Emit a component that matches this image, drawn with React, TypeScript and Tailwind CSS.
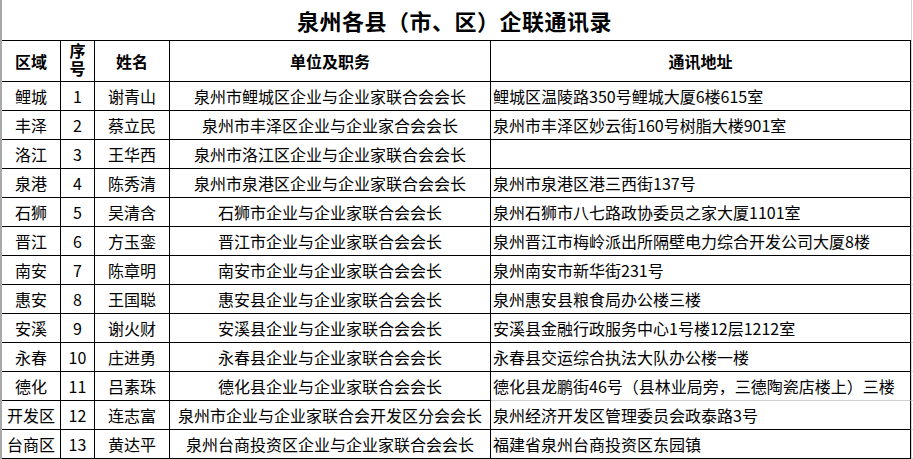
import React from "react"

type Row = {
  area: string
  no: number
  name: string
  unit: string
  addr: string
}

const rows: Row[] = [
  { area: "鲤城", no: 1, name: "谢青山", unit: "泉州市鲤城区企业与企业家联合会会长", addr: "鲤城区温陵路350号鲤城大厦6楼615室" },
  { area: "丰泽", no: 2, name: "蔡立民", unit: "泉州市丰泽区企业与企业家合会会长", addr: "泉州市丰泽区妙云街160号树脂大楼901室" },
  { area: "洛江", no: 3, name: "王华西", unit: "泉州市洛江区企业与企业家联合会会长", addr: "" },
  { area: "泉港", no: 4, name: "陈秀清", unit: "泉州市泉港区企业与企业家联合会会长", addr: "泉州市泉港区港三西街137号" },
  { area: "石狮", no: 5, name: "吴清含", unit: "石狮市企业与企业家联合会会长", addr: "泉州石狮市八七路政协委员之家大厦1101室" },
  { area: "晋江", no: 6, name: "方玉銮", unit: "晋江市企业与企业家联合会会长", addr: "泉州晋江市梅岭派出所隔壁电力综合开发公司大厦8楼" },
  { area: "南安", no: 7, name: "陈章明", unit: "南安市企业与企业家联合会会长", addr: "泉州南安市新华街231号" },
  { area: "惠安", no: 8, name: "王国聪", unit: "惠安县企业与企业家联合会会长", addr: "泉州惠安县粮食局办公楼三楼" },
  { area: "安溪", no: 9, name: "谢火财", unit: "安溪县企业与企业家联合会会长", addr: "安溪县金融行政服务中心1号楼12层1212室" },
  { area: "永春", no: 10, name: "庄进勇", unit: "永春县企业与企业家联合会会长", addr: "永春县交运综合执法大队办公楼一楼" },
  { area: "德化", no: 11, name: "吕素珠", unit: "德化县企业与企业家联合会会长", addr: "德化县龙鹏街46号（县林业局旁，三德陶瓷店楼上）三楼" },
  { area: "开发区", no: 12, name: "连志富", unit: "泉州市企业与企业家联合会开发区分会会长", addr: "泉州经济开发区管理委员会政泰路3号" },
  { area: "台商区", no: 13, name: "黄达平", unit: "泉州台商投资区企业与企业家联合会会长", addr: "福建省泉州台商投资区东园镇" },
]

// black cell edge on the right and bottom, like the sheet's borders
const cell = "flex items-center justify-center border-r border-b border-black whitespace-nowrap"

export default function App() {
  return (
    <div
      className="w-[913px] h-[459px] overflow-hidden bg-white text-black flex"
      style={{ fontFamily: '"Noto Sans CJK SC", "Noto Sans", sans-serif' }}
    >
      {/* sheet edge on the left */}
      <div className="w-[2px] shrink-0 bg-[#a8a8a8]" />

      <div className="flex flex-col w-[911px]">
        {/* Title */}
        <div className="h-[40px] flex items-center justify-center pr-[6px] text-[22px] font-bold tracking-[0.5px] bg-[linear-gradient(to_right,transparent_909px,#d4d4d4_909px,#d4d4d4_910px,transparent_910px)]">
          泉州各县（市、区）企联通讯录
        </div>

        {/* Table */}
        <div className="grid grid-cols-[59px_34px_75px_321px_420px_2px] grid-rows-[42px] auto-rows-[29px] text-[16px] leading-none">
          {/* header */}
          <div className={`${cell} border-t font-bold`}>区域</div>
          <div className={`${cell} border-t font-bold`}>
            <span className="[writing-mode:vertical-rl] tracking-[2px] leading-none">序号</span>
          </div>
          <div className={`${cell} border-t font-bold`}>姓名</div>
          <div className={`${cell} border-t font-bold`}>单位及职务</div>
          <div className={`${cell} border-t font-bold`}>通讯地址</div>
          <div className="border-b border-[#d4d4d4] bg-[linear-gradient(to_right,#d4d4d4_1px,transparent_1px)]" />

          {rows.map((r) => (
            <React.Fragment key={r.no}>
              <div className={cell}>{r.area}</div>
              <div className={cell}>{r.no}</div>
              <div className={cell}>{r.name}</div>
              <div className={cell}>{r.unit}</div>
              <div
                className={`flex items-center pl-[2px] border-r border-b whitespace-nowrap ${
                  r.no === 11 ? "border-r-black border-b-[#d0d0d0]" : "border-black"
                }`}
              >
                {r.addr}
              </div>
              <div className="border-b border-[#d4d4d4] bg-[linear-gradient(to_right,#d4d4d4_1px,transparent_1px)]" />
            </React.Fragment>
          ))}
        </div>
      </div>
    </div>
  )
}
